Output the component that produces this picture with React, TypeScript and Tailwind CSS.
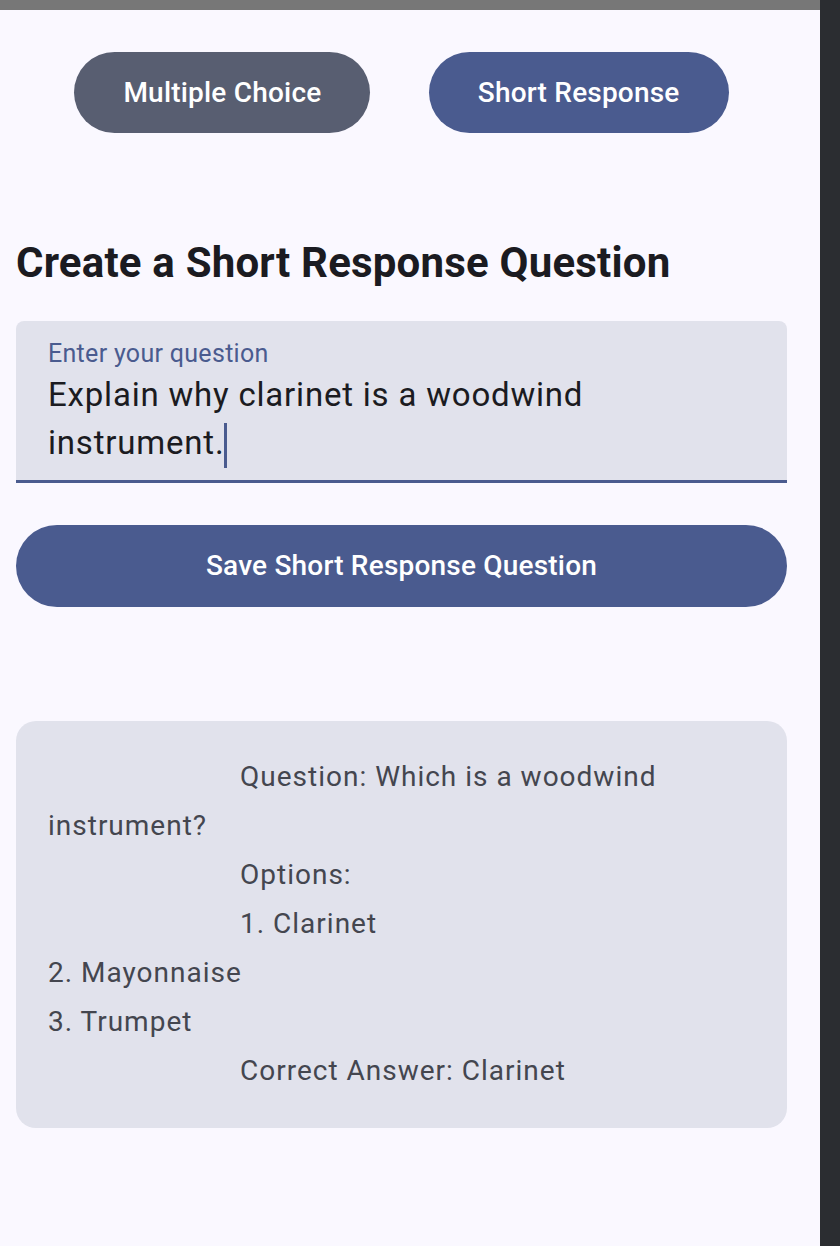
import { FC } from "react";

const indented = "pl-[192px]";

const App: FC = () => {
  return (
    <div className="flex h-[1246px] w-[840px] overflow-hidden bg-[#2b2d31] font-['Roboto',sans-serif]">
      <div className="flex h-full w-[820px] flex-col bg-[#faf8ff]">
        <div className="h-[10px] w-full bg-[#777777]" />
        <div className="flex flex-col pl-4 pr-[33px]">
          <div className="mt-[42px] flex justify-evenly">
            <button className="h-[81px] rounded-full bg-[#585e71] px-[49px] text-[28px] font-medium tracking-[0.2px] text-white">
              Multiple Choice
            </button>
            <button className="h-[81px] rounded-full bg-[#4a5b8f] px-[49px] text-[28px] font-medium tracking-[0.2px] text-white">
              Short Response
            </button>
          </div>

          <h1 className="mt-[105px] h-[50px] text-[42px] font-bold leading-[50px] tracking-[0.2px] text-[#1b1b21]">
            Create a Short Response Question
          </h1>

          <div className="mt-[33px] rounded-t-lg border-b-[3px] border-[#4a5b8f] bg-[#e1e2ec] px-8 pb-3 pt-4">
            <div className="h-[34px] text-[25px] leading-[34px] tracking-[0.3px] text-[#4a5b8f]">
              Enter your question
            </div>
            <div className="text-[33px] leading-[48px] tracking-[0.8px] text-[#1b1b21]">
              Explain why clarinet is a woodwind
              <br />
              instrument.
              <span className="inline-block h-[45px] w-[3px] bg-[#4a5b8f] align-middle" />
            </div>
          </div>

          <button className="mt-[42px] h-[82px] w-full rounded-full bg-[#4a5b8f] text-[28px] font-medium tracking-[0.2px] text-white">
            Save Short Response Question
          </button>

          <div className="mt-[114px] rounded-[20px] bg-[#e1e2ec] px-8 pb-[33px] pt-[31px] text-[28px] leading-[49px] tracking-[1px] text-[#44464f]">
            <div className={indented}>Question: Which is a woodwind</div>
            <div>instrument?</div>
            <div className={indented}>Options:</div>
            <div className={indented}>1. Clarinet</div>
            <div>2. Mayonnaise</div>
            <div>3. Trumpet</div>
            <div className={indented}>Correct Answer: Clarinet</div>
          </div>
        </div>
      </div>
    </div>
  );
};

export default App;
